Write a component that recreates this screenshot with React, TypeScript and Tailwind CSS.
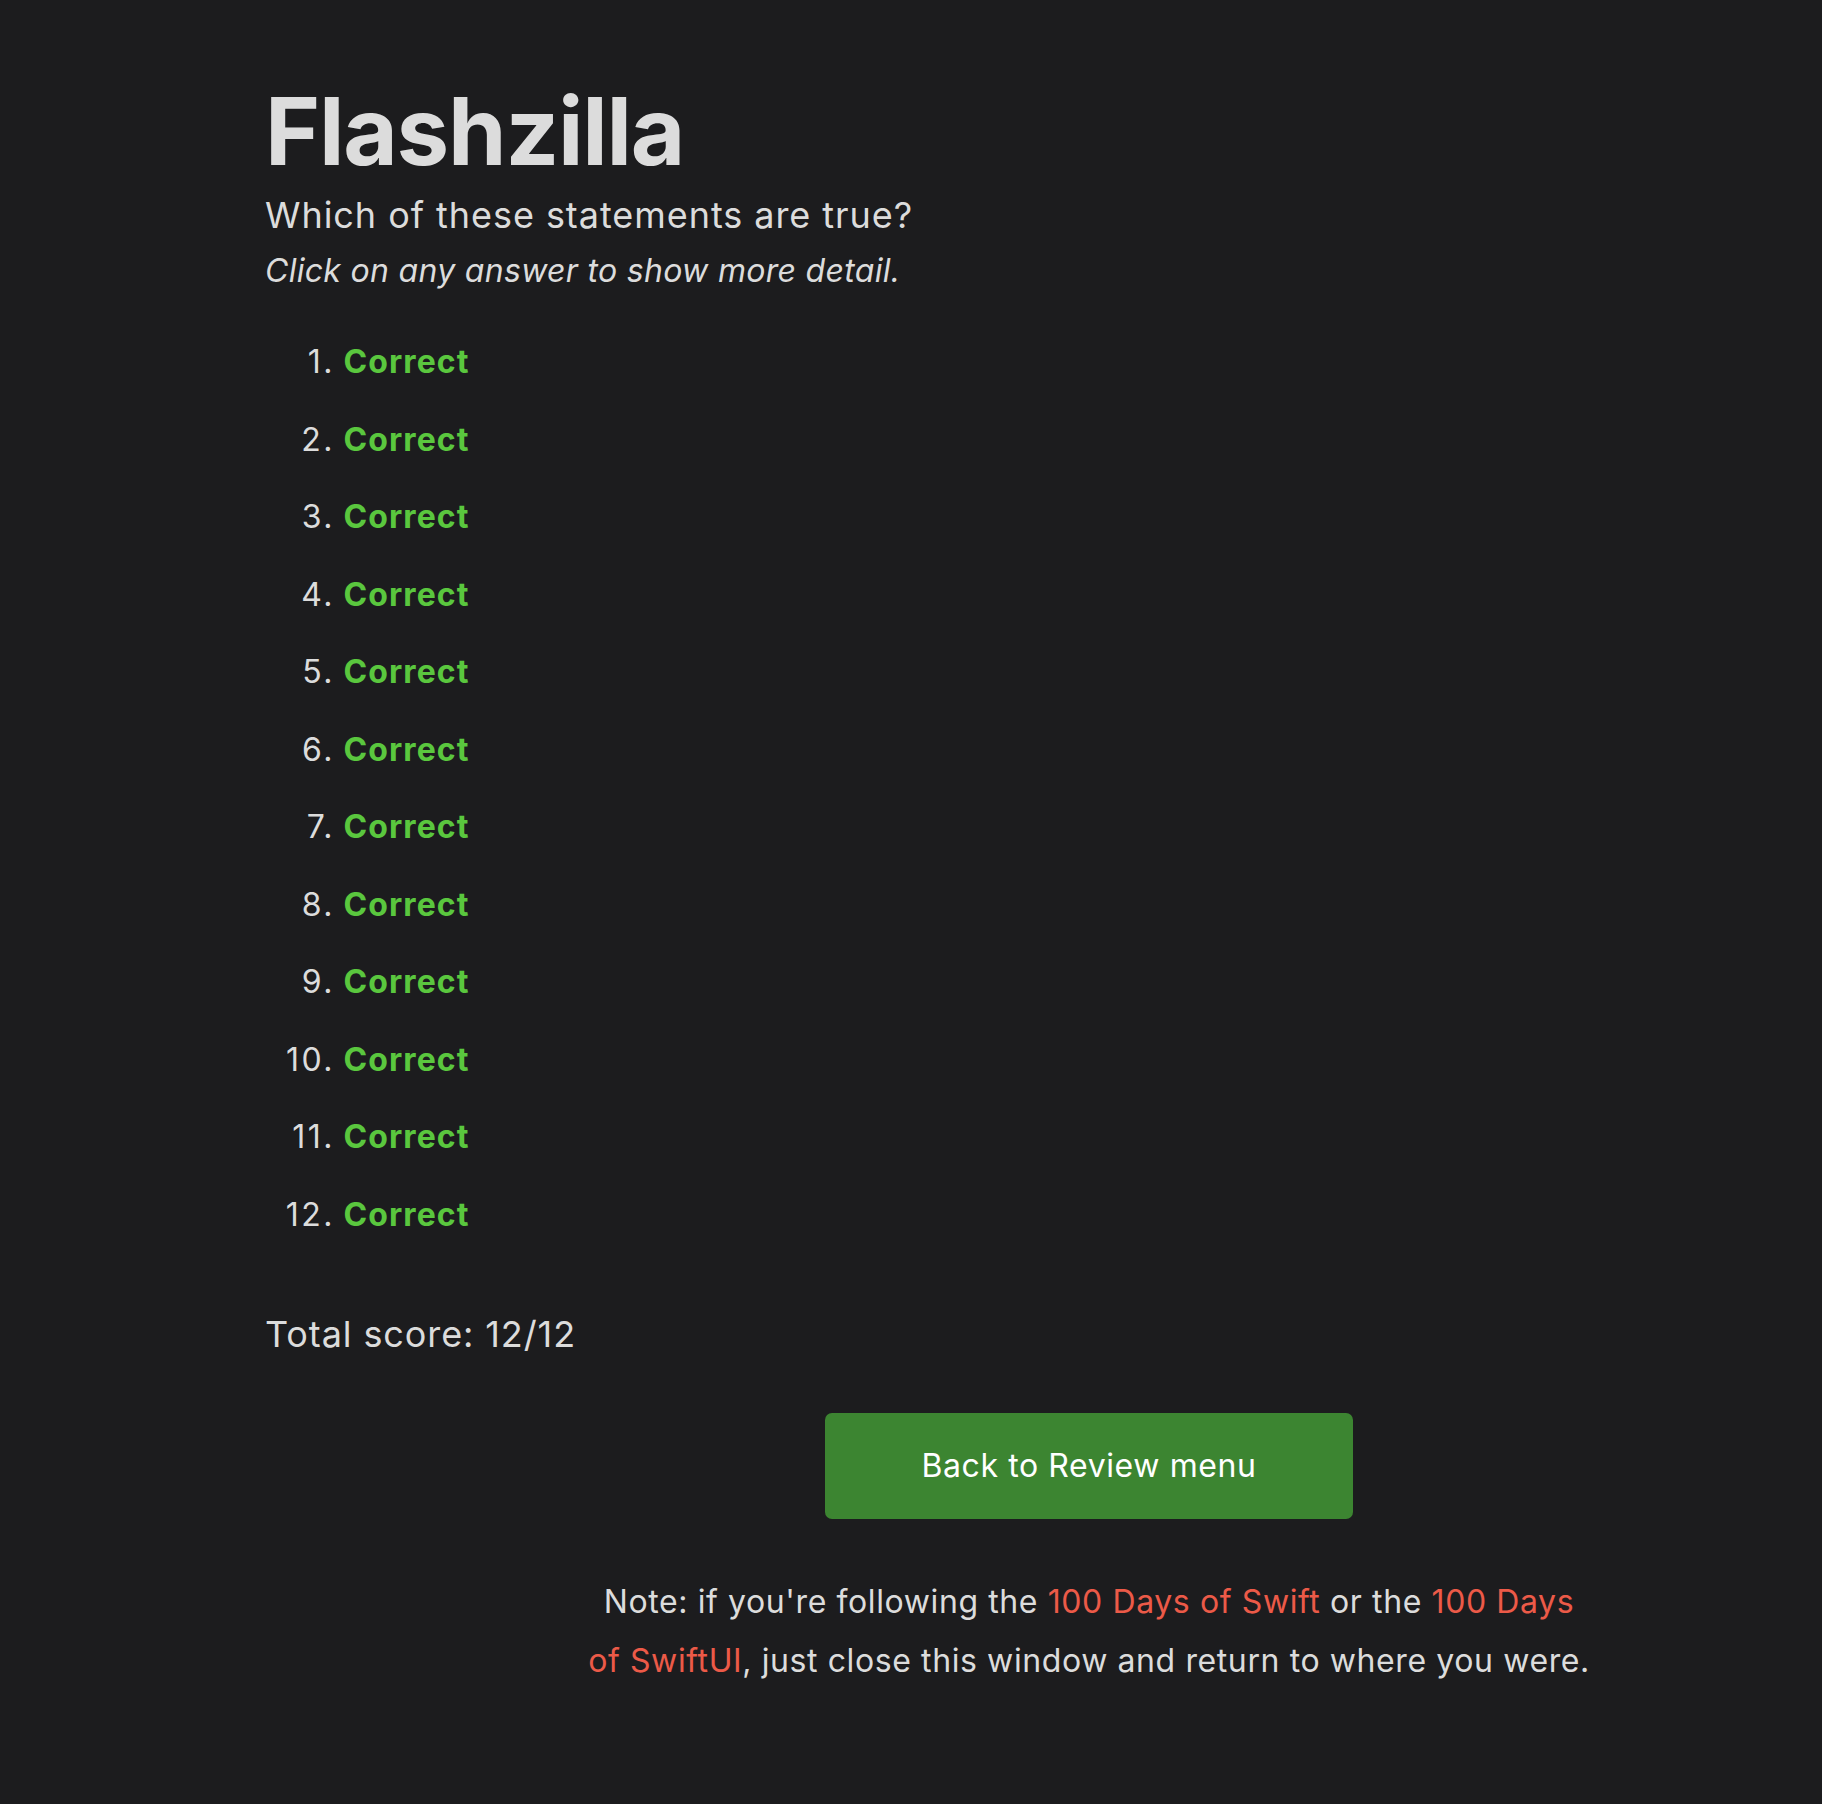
const answers = Array.from({ length: 12 }, (_, i) => i + 1);

export default function App() {
  return (
    <div className="min-h-[1804px] w-full bg-[#1c1c1e] text-[#dcdcdc] font-['Inter',sans-serif]">
      <div className="pl-[265px] pt-[81px]">
        <h1 className="text-[94px] leading-[100px] font-bold tracking-[-1.2px]">Flashzilla</h1>
        <p className="mt-[12px] text-[36px] leading-[44px] tracking-[0.95px]">Which of these statements are true?</p>
        <p className="mt-[14px] text-[32px] leading-[40px] italic tracking-[0.3px]">Click on any answer to show more detail.</p>

        <ol className="mt-[51px] flex flex-col gap-[37.5px]">
          {answers.map((n) => (
            <li key={n} className="flex text-[32px] leading-[40px]">
              <span className="w-[70px] text-right tracking-[2.5px]">{n}.</span>
              <span className="pl-[8.5px] font-bold tracking-[1.1px] text-[#5ac73e]">Correct</span>
            </li>
          ))}
        </ol>

        <p className="mt-[77px] text-[36px] leading-[44px] tracking-[0.9px]">Total score: 12/12</p>
      </div>

      <div className="ml-[539px] w-[1100px] text-center">
        <button className="mt-[57px] mx-auto flex h-[106px] w-[528px] items-center justify-center rounded-[7px] bg-[#3c8531] text-[32px] tracking-[0.6px] text-white">
          Back to Review menu
        </button>
        <p className="mt-[53px] text-[32px] leading-[59px] tracking-[0.6px]">
          Note: if you're following the <a className="text-[#ec5a48]">100 Days of Swift</a> or the{" "}
          <a className="text-[#ec5a48]">100 Days<br />of SwiftUI</a>, just close this window and return to where you were.
        </p>
      </div>
    </div>
  );
}
